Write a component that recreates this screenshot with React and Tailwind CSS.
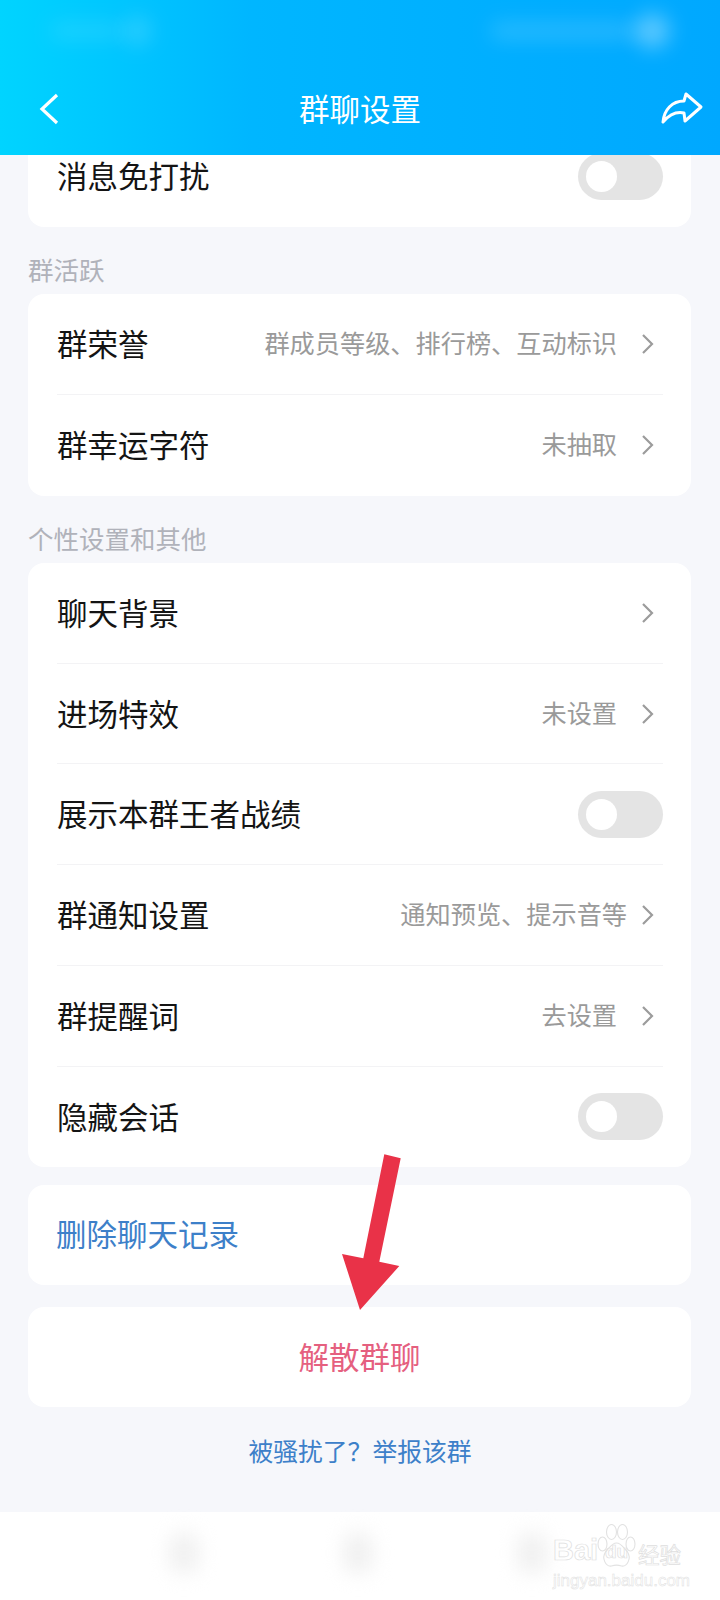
const Chevron = () => (
  <svg width="14" height="22" viewBox="0 0 14 22" fill="none" className="mr-[8px] shrink-0">
    <path d="M2 2l9 9-9 9" stroke="#9c9c9c" strokeWidth="2.2" />
  </svg>
);

const Toggle = () => (
  <div className="flex h-[47px] w-[85px] shrink-0 items-center rounded-full bg-[#e4e4e4] pl-[8px]">
    <div className="h-[31px] w-[31px] rounded-full bg-white" />
  </div>
);

const Row = ({ label, value, toggle, arrow, last, tight }) => (
  <div className={"flex h-[100.7px] items-center " + (last ? "" : "border-b border-[#f3f3f5]")}>
    <span className="flex-1 pb-[2px] text-[30.5px] leading-[40px] text-[#141414]">{label}</span>
    {value && (
      <span className={"pb-[2px] text-[25.2px] text-[#9a9a9a] " + (tight ? "mr-[14px]" : "mr-[24px]")}>{value}</span>
    )}
    {arrow && <Chevron />}
    {toggle && <Toggle />}
  </div>
);

const Card = ({ children }) => (
  <div className="mr-[29px] ml-[28px] rounded-2xl bg-white pr-[28px] pl-[29px]">{children}</div>
);

const SectionLabel = ({ children }) => (
  <div className="ml-[28px] flex h-[67.5px] items-center pt-[17px] text-[25.5px] text-[#b0b2ba]">{children}</div>
);

export default function App() {
  return (
    <div
      className="relative flex h-[1600px] w-[720px] flex-col overflow-hidden bg-[#f6f7fb]"
      style={{ fontFamily: '"Noto Sans CJK SC", "Noto Sans", sans-serif' }}
    >
      {/* Header */}
      <div className="flex h-[155px] shrink-0 flex-col bg-gradient-to-r from-[#00d4ff] via-[#00b6ff] via-35% to-[#00a8ff]">
        {/* blurred status bar */}
        <div className="flex h-[62px] items-center justify-between px-[50px]">
          <div className="flex items-center">
            <div className="h-[18px] w-[72px] rounded-full bg-white/10 blur-[10px]" />
            <div className="h-[30px] w-[30px] rounded-full bg-white/15 blur-[10px]" />
          </div>
          <div className="flex items-center">
            <div className="h-[18px] w-[144px] rounded-full bg-white/15 blur-[10px]" />
            <div className="h-[34px] w-[36px] rounded-full bg-white/35 blur-[10px]" />
          </div>
        </div>
        {/* title bar */}
        <div className="flex items-center pt-[24px]">
          <div className="w-[100px] pl-[39px]">
            <svg width="20" height="32" viewBox="0 0 20 32" fill="none">
              <path d="M18 2L3 16l15 14" stroke="white" strokeWidth="3.2" />
            </svg>
          </div>
          <div className="flex-1 pb-[2px] text-center text-[30.5px] leading-[44px] text-white">群聊设置</div>
          <div className="flex w-[100px] justify-end pr-[15px]">
            <svg width="44" height="36" viewBox="0 0 44 36" fill="none">
              <path
                d="M2 31C3 19 11 10 23 10L25 3 40 16 24 30 23 22C14 20 8 24 2 31Z"
                stroke="white"
                strokeWidth="3"
                strokeLinejoin="round"
              />
            </svg>
          </div>
        </div>
      </div>

      {/* Settings list, scrolled so the first row sits under the header */}
      <div className="flex-1 overflow-hidden">
        <div className="mt-[-29px]">
          <Card>
            <Row label="消息免打扰" toggle last />
          </Card>
          <SectionLabel>群活跃</SectionLabel>
          <Card>
            <Row label="群荣誉" value="群成员等级、排行榜、互动标识" arrow />
            <Row label="群幸运字符" value="未抽取" arrow last />
          </Card>
          <SectionLabel>个性设置和其他</SectionLabel>
          <Card>
            <Row label="聊天背景" arrow />
            <Row label="进场特效" value="未设置" arrow />
            <Row label="展示本群王者战绩" toggle />
            <Row label="群通知设置" value="通知预览、提示音等" arrow tight />
            <Row label="群提醒词" value="去设置" arrow />
            <Row label="隐藏会话" toggle last />
          </Card>
          <div className="mt-[18px] mr-[29px] ml-[28px] flex h-[100px] items-center rounded-2xl bg-white pb-[2px] pl-[28px] text-[30.5px] text-[#3d80c9]">
            删除聊天记录
          </div>
          <div className="mt-[22px] mr-[29px] ml-[28px] flex h-[100px] items-center justify-center rounded-2xl bg-white text-[30.5px] text-[#e5607f]">
            解散群聊
          </div>
          <div className="mt-[25px] text-center text-[24.8px] leading-[36px] text-[#3d80c9]">被骚扰了？举报该群</div>
        </div>
      </div>

      {/* Bottom bar */}
      <div className="flex h-[88px] shrink-0 items-center justify-center gap-[144px] bg-white pr-[4px] pb-[6px]">
        <div className="h-[42px] w-[30px] rounded-full bg-[#f0f0f0] blur-[10px]" />
        <div className="h-[42px] w-[30px] rounded-full bg-[#f0f0f0] blur-[10px]" />
        <div className="h-[42px] w-[30px] rounded-full bg-[#f0f0f0] blur-[10px]" />
      </div>

      {/* Watermark */}
      <div className="absolute top-[1522px] left-[553px] flex w-[130px] flex-col font-['Liberation_Sans',sans-serif] text-transparent [-webkit-text-stroke:0.7px_#dedede]">
        <div className="flex h-[46px] items-end">
          <span className="w-[44px] pb-[1px] text-[29px] leading-[34px] font-bold">Bai</span>
          <div className="relative flex h-[44px] w-[39px] shrink-0 items-end justify-center pb-[5px]">
            <svg width="39" height="44" viewBox="0 0 39 44" fill="none" className="absolute top-0 left-0" stroke="#e2e2e2" strokeWidth="1.1">
              <ellipse cx="5.5" cy="20" rx="4.5" ry="7" />
              <ellipse cx="14.5" cy="8" rx="5" ry="7.5" />
              <ellipse cx="25.5" cy="8" rx="5" ry="7.5" />
              <ellipse cx="33.5" cy="20" rx="4.5" ry="7" />
              <path d="M19.5 19c-5 0-7 5-11 9-4 6 0 15 6 14 3-1 7-1 10 0 6 1 10-8 6-14-4-4-6-9-11-9Z" />
            </svg>
            <span className="text-[19px] leading-[22px] font-bold">du</span>
          </div>
          <span className="pb-[1px] pl-[2px] font-['Noto_Sans_CJK_SC',sans-serif] text-[21.5px] leading-[26px] whitespace-nowrap">经验</span>
        </div>
        <span className="pt-[3px] text-[17px] leading-[20px] whitespace-nowrap [-webkit-text-stroke:0.5px_#e0e0e0]">jingyan.baidu.com</span>
      </div>

      {/* Annotation arrow */}
      <svg width="80" height="170" viewBox="0 0 80 170" className="absolute top-[1150px] left-[330px]">
        <path d="M54.3 4.3L70.7 8.3 49.3 111.7 69.3 116 30 160 12 104 33.3 108.3Z" fill="#e93248" />
      </svg>
    </div>
  );
}
